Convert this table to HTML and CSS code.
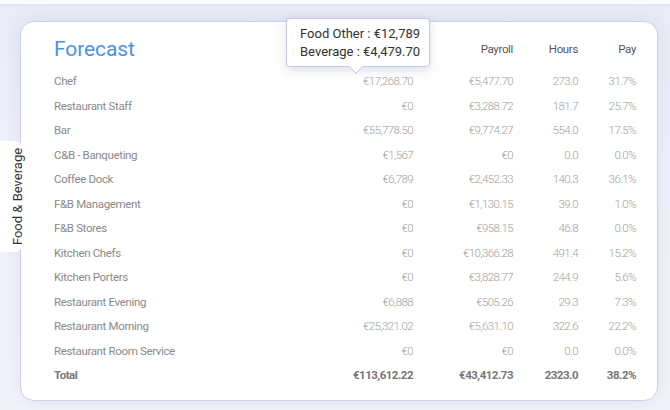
FILE: index.html
```html
<!DOCTYPE html>
<html>
<head>
<meta charset="utf-8">
<link rel="stylesheet" href="styles.css">
</head>
<body>
<div class="topbar"></div>
<div class="page">
  <div class="side-tab"><span>Food &amp; Beverage</span></div>
  <div class="card">
    <div class="grid">
      <div class="title">Forecast</div>
      <div class="head"></div>
      <div class="head">Payroll</div>
      <div class="head">Hours</div>
      <div class="head">Pay</div>
    </div>
    <div class="grid rows">
      <div class="name">Chef</div><div class="num">€17,268.70</div><div class="num">€5,477.70</div><div class="num">273.0</div><div class="num">31.7%</div>
      <div class="name">Restaurant Staff</div><div class="num">€0</div><div class="num">€3,288.72</div><div class="num">181.7</div><div class="num">25.7%</div>
      <div class="name">Bar</div><div class="num">€55,778.50</div><div class="num">€9,774.27</div><div class="num">554.0</div><div class="num">17.5%</div>
      <div class="name">C&amp;B - Banqueting</div><div class="num">€1,567</div><div class="num">€0</div><div class="num">0.0</div><div class="num">0.0%</div>
      <div class="name">Coffee Dock</div><div class="num">€6,789</div><div class="num">€2,452.33</div><div class="num">140.3</div><div class="num">36.1%</div>
      <div class="name">F&amp;B Management</div><div class="num">€0</div><div class="num">€1,130.15</div><div class="num">39.0</div><div class="num">1.0%</div>
      <div class="name">F&amp;B Stores</div><div class="num">€0</div><div class="num">€958.15</div><div class="num">46.8</div><div class="num">0.0%</div>
      <div class="name">Kitchen Chefs</div><div class="num">€0</div><div class="num">€10,366.28</div><div class="num">491.4</div><div class="num">15.2%</div>
      <div class="name">Kitchen Porters</div><div class="num">€0</div><div class="num">€3,828.77</div><div class="num">244.9</div><div class="num">5.6%</div>
      <div class="name">Restaurant Evening</div><div class="num">€6,888</div><div class="num">€505.26</div><div class="num">29.3</div><div class="num">7.3%</div>
      <div class="name">Restaurant Morning</div><div class="num">€25,321.02</div><div class="num">€5,631.10</div><div class="num">322.6</div><div class="num">22.2%</div>
      <div class="name">Restaurant Room Service</div><div class="num">€0</div><div class="num">€0</div><div class="num">0.0</div><div class="num">0.0%</div>
      <div class="name total">Total</div><div class="num total">€113,612.22</div><div class="num total">€43,412.73</div><div class="num total">2323.0</div><div class="num total">38.2%</div>
    </div>
    <div class="tooltip">
      <div>Food Other : €12,789</div>
      <div>Beverage : €4,479.70</div>
    </div>
  </div>
</div>
</body>
</html>
```
FILE: styles.css
```css
html, body {
  margin: 0;
  padding: 0;
}
body {
  width: 670px;
  height: 410px;
  overflow: hidden;
  background: #eef0f8;
  font-family: Roboto, "Liberation Sans", sans-serif;
}
.topbar {
  height: 4px;
  background: #fbfbfd;
  border-bottom: 1px solid #e3e5f0;
}
.page {
  position: relative;
  padding: 16px 12px 9px 20px;
  background: linear-gradient(180deg, #e9ebf6 0%, #f0f1f9 40%, #f2f3fa 100%);
}
.card {
  position: relative;
  height: 380px;
  box-sizing: border-box;
  background: #fff;
  border: 1px solid #cdd0ec;
  border-radius: 14px;
  box-shadow: 0 0 18px rgba(110, 120, 200, 0.14);
  padding-top: 15px;
}
.grid {
  display: grid;
  grid-template-columns: 1fr 100px 100px 65px 58px;
  padding: 0 21px 0 33px;
  align-items: center;
}
.title {
  font-size: 21px;
  color: #4a92e6;
  height: 24px;
  line-height: 24px;
  letter-spacing: -0.1px;
}
.head {
  text-align: right;
  font-size: 11.5px;
  color: #555;
  letter-spacing: -0.35px;
}
.rows {
  margin-top: 8px;
  grid-auto-rows: 24.5px;
}
.name {
  font-size: 11.5px;
  color: #8a8a8a;
  letter-spacing: -0.35px;
}
.num {
  text-align: right;
  font-size: 11.5px;
  color: #a0a0a0;
  font-weight: 300;
  letter-spacing: -0.6px;
}
.total {
  font-weight: 700;
  color: #777;
  letter-spacing: -0.5px;
}
.side-tab {
  position: absolute;
  left: 0;
  top: 136px;
  width: 22px;
  height: 111px;
  background: #fff;
  border-radius: 0 7px 7px 0;
  display: flex;
  align-items: center;
  justify-content: center;
  z-index: 2;
}
.side-tab span {
  transform: rotate(-90deg);
  white-space: nowrap;
  font-size: 13px;
  color: #333;
  margin-left: 14px;
}
.tooltip {
  position: absolute;
  left: 265px;
  top: -4px;
  width: 144px;
  height: 49px;
  box-sizing: border-box;
  background: #fff;
  border: 1px solid #c8cbe0;
  border-radius: 4px;
  box-shadow: 0 3px 10px rgba(90, 100, 170, 0.22);
  font-size: 13px;
  color: #333;
  line-height: 18px;
  padding: 6px 0 0 13px;
}
.tooltip::after {
  content: "";
  position: absolute;
  left: 64px;
  bottom: -6px;
  width: 9px;
  height: 9px;
  background: #fff;
  border-right: 1px solid #c8cbe0;
  border-bottom: 1px solid #c8cbe0;
  transform: rotate(45deg);
}
```
